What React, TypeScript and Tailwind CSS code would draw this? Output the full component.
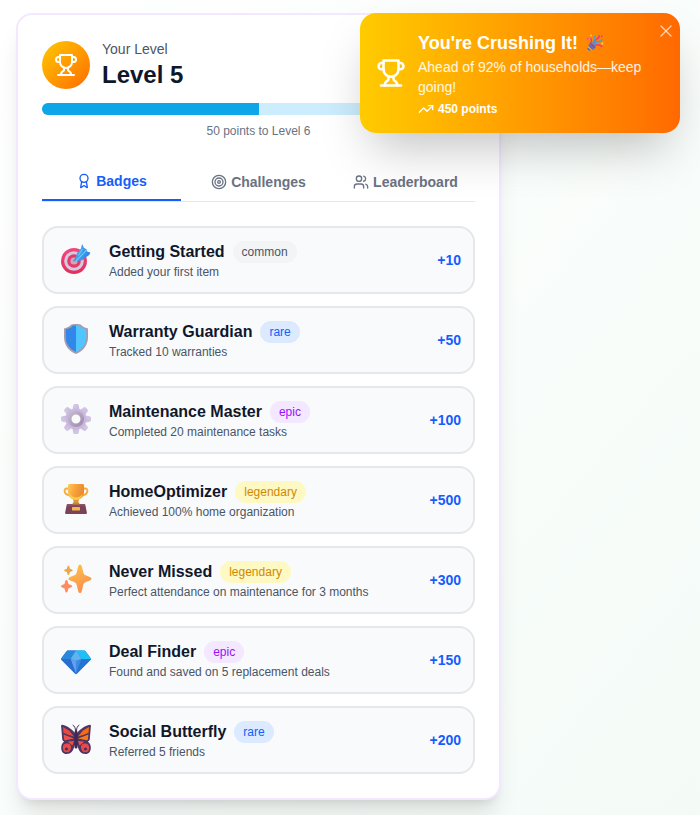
import type { ReactNode } from "react";
import { Award, Target, TrendingUp, Users, X } from "lucide-react";

type Rarity = "common" | "rare" | "epic" | "legendary";

const rarityStyles: Record<Rarity, string> = {
  common: "bg-gray-100 text-gray-600",
  rare: "bg-blue-100 text-blue-600",
  epic: "bg-purple-100 text-purple-600",
  legendary: "bg-yellow-100 text-yellow-600",
};

function TrophyIcon({ className }: { className: string }) {
  return (
    <svg viewBox="0 0 24 24" fill="none" stroke="currentColor" strokeWidth="2" strokeLinecap="round" strokeLinejoin="round" className={className} aria-hidden="true">
      <path d="M6 9H4.5a2.5 2.5 0 0 1 0-5H6" />
      <path d="M18 9h1.5a2.5 2.5 0 0 0 0-5H18" />
      <path d="M4 22h16" />
      <path d="M10 14.66V17c0 .55-.47.98-.97 1.21C7.85 18.75 7 20.24 7 22" />
      <path d="M14 14.66V17c0 .55.47.98.97 1.21C16.15 18.75 17 20.24 17 22" />
      <path d="M18 2H6v7a6 6 0 0 0 12 0V2Z" />
    </svg>
  );
}

function Picture({ children }: { children: ReactNode }) {
  return (
    <svg viewBox="0 0 32 32" className="size-8" aria-hidden="true">
      {children}
    </svg>
  );
}

function BullseyePicture() {
  return (
    <Picture>
      <defs>
        <linearGradient id="bullseye" x1="0" y1="0" x2="0" y2="1">
          <stop offset="0" stopColor="#f0487f" />
          <stop offset="1" stopColor="#e0305c" />
        </linearGradient>
        <linearGradient id="dart" x1="0" y1="0" x2="1" y2="0.4">
          <stop offset="0" stopColor="#4fb4ee" />
          <stop offset="1" stopColor="#2f86e8" />
        </linearGradient>
      </defs>
      <circle cx="14" cy="18" r="13" fill="url(#bullseye)" />
      <circle cx="14" cy="18" r="9.800" fill="#d6c9dd" />
      <circle cx="14" cy="18" r="6.800" fill="#e63a6c" />
      <circle cx="14" cy="18" r="3.600" fill="#c9a9bf" />
      <path d="M13.600 18.800 13.300 17.500 19 11l2.500 2.500Z" fill="#5c87b0" />
      <path d="m15.500 16.500 1.500-6.500 4.200-4.800c0-1.800.4-3.200 1.300-4l1.300 3.600 2.200 1.200.8 2.200 3.700 1.600c-.8 2-2.500 3.600-4.600 4.200L22 17.200l-6 1Z" fill="url(#dart)" />
      <path d="m16 17.800 7.500-7.500 3.500-4" stroke="#73cbfa" strokeWidth="1.100" fill="none" />
      <path d="m18.500 12.500 4-6.500" stroke="#6cc3f6" strokeWidth="1.200" fill="none" />
    </Picture>
  );
}

function ShieldPicture() {
  return (
    <Picture>
      <path d="M16 1c-2 0-4.500.2-5.500 1.200C9.200 3.800 7.300 4.600 5 5c-.7.200-1 .6-1 1.300V14c0 8 4.500 13.500 11.300 16.800.5.2.9.2 1.400 0C23.500 27.500 28 22 28 14V6.300c0-.7-.3-1.100-1-1.300-2.300-.4-4.200-1.200-5.500-2.800C20.500 1.200 18 1 16 1Z" fill="#a69cae" />
      <path d="M16 2.600h-3.200c-1.300 2-3.800 3.400-7 3.900V14c0 7 4 12 10.200 15Z" fill="#3187ea" />
      <path d="M16 2.600h3.200c1.300 2 3.800 3.400 7 3.900V14c0 7-4 12-10.200 15Z" fill="#50c5ff" />
    </Picture>
  );
}

function GearPicture() {
  return (
    <Picture>
      <defs>
        <linearGradient id="gear" x1="0" y1="0" x2="1" y2="1">
          <stop offset="0" stopColor="#d6cce6" />
          <stop offset="1" stopColor="#c6b5de" />
        </linearGradient>
        <linearGradient id="gear-ring" x1="0" y1="0" x2="1" y2="1">
          <stop offset="0" stopColor="#c3b8cd" />
          <stop offset="1" stopColor="#a18daf" />
        </linearGradient>
      </defs>
      {[0, 45, 90, 135, 180, 225, 270, 315].map((angle) => (
        <path key={angle} d="m12 9.500 1.200-7c.2-1 .8-1.500 1.700-1.500h2.200c.9 0 1.500.5 1.700 1.500l1.200 7Z" transform={`rotate(${angle} 16 16)`} fill="url(#gear)" />
      ))}
      <circle cx="16" cy="16" r="8.500" fill="none" stroke="#c8b9dc" strokeWidth="4" />
      <circle cx="16" cy="16" r="6.300" fill="none" stroke="url(#gear-ring)" strokeWidth="3.600" />
    </Picture>
  );
}

function CupPicture() {
  return (
    <Picture>
      <defs>
        <linearGradient id="cup" x1="0" y1="0" x2="1" y2="0.3">
          <stop offset="0" stopColor="#ffcb55" />
          <stop offset="0.5" stopColor="#f8a23c" />
          <stop offset="1" stopColor="#e98a2e" />
        </linearGradient>
      </defs>
      <path d="M9.500 5.500H7C5 5.500 4.300 6.600 4.600 8.300 5.200 11.200 8 12.500 11 12.500M22.500 5.500H25c2 0 2.700 1.100 2.400 2.800-.6 2.900-3.400 4.200-6.400 4.200" fill="none" stroke="#f9ac33" strokeWidth="1.800" />
      <path d="M13 16h6l-.7 3.500 1.500 3.500h-7.600l1.500-3.500Z" fill="#dc9838" />
      <path d="M8 2.500C8 1.500 8.700 1 9.500 1h13c.8 0 1.500.5 1.500 1.500V9c0 4.500-3.200 7.500-8 8-4.800-.5-8-3.500-8-8Z" fill="url(#cup)" />
      <path d="M9 9.500c1.200 3 3.500 4.500 7 5 2.800-.3 5-1.200 6.800-3.500-1.300 4-3.500 5.500-6.800 6-4-.4-6.500-3.200-7-7.500Z" fill="#fbd044" />
      <path d="M8 21h16c.8 0 1.200.5 1.400 1.200l1.500 7.500c.2.800-.2 1.300-1 1.300H6.100c-.8 0-1.200-.5-1-1.300l1.500-7.500C6.800 21.500 7.200 21 8 21Z" fill="#7c4257" />
      <path d="M7.300 21h17.400l.5 1.700H6.800Z" fill="#8f5362" />
      <path d="M13 19.500h6l.7 2h-7.400Z" fill="#c98838" />
      <rect x="12" y="24" width="8" height="3.600" rx="0.600" fill="#f4b54b" />
    </Picture>
  );
}

function SparklesPicture() {
  return (
    <Picture>
      <defs>
        <linearGradient id="star" x1="0" y1="0" x2="0.500" y2="1">
          <stop offset="0" stopColor="#fbc94a" />
          <stop offset="1" stopColor="#fb8f4e" />
        </linearGradient>
      </defs>
      <path d="M18 4c.7-3.400 3.300-3.400 4 0l1.300 5.500c.4 1.700 1.200 2.500 2.800 3l3.800 1.500c2 .9 2 2.700 0 3.500L26 19c-1.600.5-2.400 1.300-2.800 3L22 27.500c-.8 3.400-3.200 3.400-4 0L16.700 22c-.4-1.700-1.200-2.500-2.700-3l-4-1.500c-2-.8-2-2.600 0-3.500l4-1.500c1.500-.5 2.300-1.300 2.700-3Z" fill="url(#star)" />
      <path d="M7.500 3.500c.3-1 1.500-1 1.800 0l.7 2.200 2 .8c.9.400.9 1.300 0 1.700l-2 .8-.7 2.300c-.3 1-1.500 1-1.800 0L6.800 9l-2-.8c-.9-.4-.9-1.300 0-1.700l2-.8Z" fill="#eba748" />
      <path d="M5.300 18c.4-1.300 2-1.300 2.300 0l.8 3 3 1.300c1 .4 1 1.500 0 1.900l-3 1.200-.8 3.200c-.3 1.300-1.900 1.300-2.300 0l-.8-3.200-2.800-1.200c-1-.4-1-1.500 0-1.900l2.800-1.300Z" fill="#ff8b5e" />
    </Picture>
  );
}

function GemPicture() {
  return (
    <Picture>
      <path d="M8 7.500h16c.7 0 1.200.2 1.600.8l5 6.700c.5.700.5 1.300 0 2L17 30.700c-.6.600-1.400.6-2 0L1.400 17c-.5-.7-.5-1.300 0-2l5-6.700c.4-.6.9-.8 1.600-.8Z" fill="#2a78d6" />
      <path d="M1 16 7.300 7.600 16 7.500 10.500 16Z" fill="#2788dc" />
      <path d="m16 7.500 8.700.1L31 16h-9.500Z" fill="#1cc0f6" />
      <path d="m16 7.500 5.500 8.500L16 18l-5.500-2Z" fill="#5fb4ee" />
      <path d="M10.500 16 16 18v13Z" fill="#62a0ee" />
      <path d="M21.500 16 16 18v13Z" fill="#3a8ae6" />
      <path d="M1 16h9.500L16 31Z" fill="#2b6dcd" />
      <path d="M31 16h-9.500L16 31Z" fill="#2672d2" />
    </Picture>
  );
}

function ButterflyPicture() {
  return (
    <Picture>
      <path d="M15.500 11C14 7.500 7 2.500 2.300 1.700 1 1.700.8 2.700 1.200 4l1 12c.3 1.500 1 2.200 2 2.700C2.200 20 1.200 22 1.200 24.500 1.200 28.500 3 31 6.500 31c4.500 0 7-3.500 8-8.500h3c1 5 3.500 8.500 8 8.500 3.500 0 5.300-2.500 5.300-6.500 0-2.500-1-4.500-3-5.800 1-.5 1.700-1.200 2-2.700l1-12c.4-1.300.2-2.300-1.100-2.300C25 2.500 18 7.500 16.500 11Z" fill="#4e3564" />
      <path d="m3 4 6 3.500 5 6-6.500-2L3.400 9.800Z" fill="#e84942" />
      <path d="m3.600 11.500 4.400 1.800 6 2.200-8.500 1.700c-1 0-1.400-.9-1.500-1.800Z" fill="#ef5049" />
      <path d="m29 4-6 3.500-5 6 6.500-2 4.100-1.700Z" fill="#f96b16" />
      <path d="M28.400 11.500 24 13.300l-6 2.200 8.500 1.700c1 0 1.400-.9 1.500-1.800Z" fill="#f77b1c" />
      <path d="M8 18.500 14 18l-1.500 4.500L9 19.800ZM24 18.500 18 18l1.500 4.500 3.500-2.700Z" fill="#ed5144" />
      <path d="M6.800 20.500c3.200 0 4.700 2 4.200 4.500-.5 2.700-2 4.300-4.500 4.300S2.800 27.300 2.800 24.500s1.500-4 4-4ZM25.200 20.500c-3.200 0-4.700 2-4.200 4.500.5 2.700 2 4.300 4.500 4.300s3.700-2 3.700-4.800-1.500-4-4-4Z" fill="#e84a4b" />
      <circle cx="6.500" cy="26" r="1.600" fill="#48305c" />
      <circle cx="25.500" cy="26" r="1.600" fill="#48305c" />
      <rect x="14.500" y="7.500" width="3" height="18" rx="1.500" fill="#402950" />
      <path d="M15.500 8c0-3-1-5-2.800-6M16.500 8c0-3 1-5 2.800-6" fill="none" stroke="#4a305a" strokeWidth="1" />
    </Picture>
  );
}

function PartyPopper() {
  return (
    <svg viewBox="0 0 32 32" className="size-[18px]" aria-hidden="true">
      <path d="M6 15 17 26 4.500 30.500c-2.200.8-3.500-.5-2.800-2.600Z" fill="#f0a22e" />
      <path d="m5.200 17.500 9.600 9.500-3.500 1.200-7.200-7.400ZM3 24l5.500 5-3 1.200L2 27Z" fill="#4a6bd0" />
      <ellipse cx="11.500" cy="20.500" rx="2.400" ry="7.400" transform="rotate(-44 11.500 20.500)" fill="#7a5a90" />
      <path d="M9 19c2.500-4 .5-7-.5-12" fill="none" stroke="#ed3b78" strokeWidth="2.600" />
      <path d="M13 19c3-4 1-8 6-10s5-4 4-7" fill="none" stroke="#ed3b78" strokeWidth="2.600" />
      <path d="M14 20c1-5 4-6 9-6.500 3-.3 4.500-1.500 6-4" fill="none" stroke="#36a3ea" strokeWidth="2.800" />
      <path d="M15 21c4-3 9-2 14 2" fill="none" stroke="#ed3b78" strokeWidth="2.800" />
      <path d="M12 16c3-4 6-8 3.500-12.500" fill="none" stroke="#35a2e9" strokeWidth="2.600" />
      <circle cx="3" cy="8" r="1.700" fill="#b85bd4" />
      <circle cx="29" cy="17" r="1.700" fill="#ffe14a" />
      <circle cx="24" cy="27.500" r="1.600" fill="#8e8ba0" />
      <circle cx="9" cy="2.500" r="1.500" fill="#ffe14a" />
      <circle cx="28" cy="4" r="1.600" fill="#e83d84" />
    </svg>
  );
}

interface BadgeItem {
  name: string;
  description: string;
  rarity: Rarity;
  points: number;
  picture: ReactNode;
}

const badges: BadgeItem[] = [
  { name: "Getting Started", description: "Added your first item", rarity: "common", points: 10, picture: <BullseyePicture /> },
  { name: "Warranty Guardian", description: "Tracked 10 warranties", rarity: "rare", points: 50, picture: <ShieldPicture /> },
  { name: "Maintenance Master", description: "Completed 20 maintenance tasks", rarity: "epic", points: 100, picture: <GearPicture /> },
  { name: "HomeOptimizer", description: "Achieved 100% home organization", rarity: "legendary", points: 500, picture: <CupPicture /> },
  { name: "Never Missed", description: "Perfect attendance on maintenance for 3 months", rarity: "legendary", points: 300, picture: <SparklesPicture /> },
  { name: "Deal Finder", description: "Found and saved on 5 replacement deals", rarity: "epic", points: 150, picture: <GemPicture /> },
  { name: "Social Butterfly", description: "Referred 5 friends", rarity: "rare", points: 200, picture: <ButterflyPicture /> },
];

const tabs = [
  { label: "Badges", Icon: Award, active: true },
  { label: "Challenges", Icon: Target, active: false },
  { label: "Leaderboard", Icon: Users, active: false },
];

function BadgeRow({ badge }: { badge: BadgeItem }) {
  return (
    <li className="flex items-center gap-3 rounded-2xl border-2 border-gray-200 bg-[#f9fafc] p-3">
      <span className="w-[41px] shrink-0 pb-0.5 pl-1">{badge.picture}</span>
      <div className="min-w-0 flex-1">
        <div className="flex h-6 items-center gap-2">
          <h3 className="text-base font-bold text-slate-900">{badge.name}</h3>
          <span className={`rounded-full border border-transparent px-2 py-0.5 text-xs ${rarityStyles[badge.rarity]}`}>{badge.rarity}</span>
        </div>
        <p className="text-xs text-gray-600">{badge.description}</p>
      </div>
      <span className="text-sm font-bold text-blue-600">+{badge.points}</span>
    </li>
  );
}

function Toast() {
  return (
    <div role="status" className="absolute top-[13px] right-5 flex w-80 items-center gap-3 rounded-2xl bg-linear-to-r from-[#ffcb00] to-[#ff6900] p-4 text-white shadow-2xl">
      <TrophyIcon className="size-[30px] shrink-0" />
      <div className="min-w-0 flex-1">
        <h2 className="flex items-center gap-2 text-lg font-bold">
          You're Crushing It! <PartyPopper />
        </h2>
        <p className="text-sm text-white/90">Ahead of 92% of households—keep going!</p>
        <p className="mt-1 flex items-center gap-1 text-xs font-bold">
          <TrendingUp className="size-4" />
          450 points
        </p>
      </div>
      <button type="button" aria-label="Dismiss" className="absolute top-2 right-1 text-white/70">
        <X className="size-5" strokeWidth={1.5} />
      </button>
    </div>
  );
}

export default function App() {
  return (
    <div className="relative min-h-screen overflow-hidden bg-linear-to-br from-white to-[#f4fbf7] px-4 pt-[13px] pb-[15px] font-['Liberation_Sans',Arial,sans-serif]">
      <main className="w-full max-w-[485px] rounded-2xl border-2 border-purple-100 bg-white p-6 shadow-xl">
        <header className="flex items-center gap-3">
          <div className="flex size-12 items-center justify-center rounded-full bg-linear-to-br from-[#ffc800] to-[#ff6900] text-white">
            <TrophyIcon className="size-6" />
          </div>
          <div>
            <p className="text-sm text-gray-600">Your Level</p>
            <h1 className="text-2xl font-bold text-slate-900">Level 5</h1>
          </div>
        </header>
        <div role="progressbar" aria-label="Level progress" aria-valuenow={50} className="mt-3 h-3 overflow-hidden rounded-full bg-sky-500/20">
          <div className="h-full w-1/2 bg-[#0ea5e9]" />
        </div>
        <p className="mt-2 text-center text-xs text-gray-500">50 points to Level 6</p>

        <div role="tablist" className="mt-6 flex gap-2 border-b border-gray-200">
          {tabs.map(({ label, Icon, active }) => (
            <button
              key={label}
              type="button"
              role="tab"
              aria-selected={active}
              className={`flex flex-1 basis-0 items-center justify-center gap-1 py-2 text-sm font-bold ${active ? "border-b-2 border-blue-600 text-blue-600" : "text-gray-500"}`}
            >
              <Icon className="size-4 shrink-0" />
              {label}
            </button>
          ))}
        </div>

        <ul className="mt-6 flex flex-col gap-3">
          {badges.map((badge) => (
            <BadgeRow key={badge.name} badge={badge} />
          ))}
        </ul>
      </main>
      <Toast />
    </div>
  );
}
